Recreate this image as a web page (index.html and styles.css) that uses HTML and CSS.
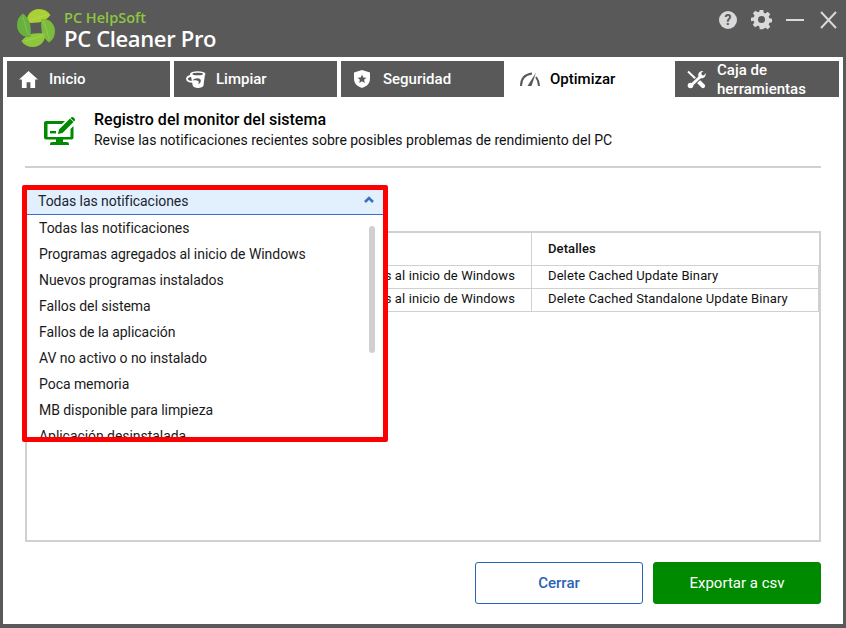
FILE: index.html
```html
<!DOCTYPE html>
<html lang="es">
<head>
<meta charset="utf-8">
<title>PC Cleaner Pro</title>
<link rel="stylesheet" href="styles.css">
</head>
<body>
<div class="window">
  <header class="titlebar">
    <div class="brand">
      <svg class="logo" viewBox="-19 -19 38 38" width="38" height="38">
        <defs>
          <path id="leaf" d="M-9 -5.500 C-10 -13.500 -4 -19 3 -19 C8 -19 12 -17 14.500 -13 C10.500 -8 5.500 -5.500 1 -5.500 C-3 -5 -6 -5 -9 -5.500 Z"/>
          <path id="rib" d="M-7 -7 C-2 -10 5 -11 11 -13" fill="none" stroke="#d6e9a0" stroke-opacity=".45" stroke-width=".6"/>
        </defs>
        <use href="#leaf" fill="#a9d034"/><use href="#rib"/>
        <g transform="rotate(90)"><use href="#leaf" fill="#7cbc3d"/><use href="#rib"/></g>
        <g transform="rotate(180)"><use href="#leaf" fill="#8fc73c"/><use href="#rib"/></g>
        <g transform="rotate(270)"><use href="#leaf" fill="#68b13f"/><use href="#rib"/></g>
      </svg>
      <div class="brand-text">
        <div class="brand-top">PC HelpSoft</div>
        <div class="brand-name">PC Cleaner Pro</div>
      </div>
    </div>
    <div class="win-controls">
      <svg viewBox="0 0 20 20" width="20" height="20"><circle cx="10" cy="10" r="9" fill="#d9d9d9"/><text x="10" y="15" text-anchor="middle" class="help-mark">?</text></svg>
      <svg viewBox="0 0 24 24" width="21" height="21"><path fill="#d9d9d9" fill-rule="evenodd" d="M10 1h4l.6 3.200 1.900.8 2.700-1.800 2.800 2.800-1.800 2.700.8 1.900 3.200.6v4l-3.200.6-.8 1.900 1.800 2.700-2.800 2.800-2.700-1.800-1.900.8L14 23h-4l-.6-3.200-1.900-.8-2.700 1.800-2.800-2.800 1.800-2.700-.8-1.900L0 14v-4l3.200-.6.8-1.900-1.800-2.700 2.800-2.800 2.700 1.800 1.900-.8zM12 8a4 4 0 1 0 0 8 4 4 0 0 0 0-8z"/></svg>
      <svg viewBox="0 0 20 20" width="20" height="20"><path d="M1 10h18" stroke="#d9d9d9" stroke-width="2"/></svg>
      <svg viewBox="0 0 20 20" width="20" height="20"><path d="M3 2l15 16M18 2L3 18" stroke="#d9d9d9" stroke-width="2"/></svg>
    </div>
  </header>

  <main class="panel">
    <nav class="tabs">
      <div class="tab">
        <span class="tab-icon"><svg viewBox="0 0 20 18" width="19" height="17"><path fill="#fff" d="M10 0l10 9h-3v9h-5v-6H8v6H3V9H0z"/></svg></span>
        <span class="tab-label">Inicio</span>
      </div>
      <div class="tab">
        <span class="tab-icon"><svg viewBox="0 0 20 17" width="20" height="17">
          <path fill="#fff" d="M4.500 3h14.500l-1.500 11.500c-.3 1.600-2.800 2.500-5.500 2.500s-5-.9-5.300-2.500L6 10.500 4.500 3z"/>
          <ellipse cx="11.700" cy="3" rx="7.800" ry="2.800" fill="#fff"/>
          <ellipse cx="11.700" cy="3" rx="5.300" ry="1.300" fill="#595959"/>
          <path fill="none" stroke="#fff" stroke-width="1.800" d="M6 4.500C3 5 1 6.300 1 8c0 1.700 2.800 2.800 6 2.800"/>
          <path fill="#595959" d="M6.500 9.500c2.500-.7 5-.2 6 .8.600.7.300 1.800-.5 2.800 3-.7 3.500-3.500 2-5-2-1.500-6-.5-7.500 1.400z"/>
        </svg></span>
        <span class="tab-label">Limpiar</span>
      </div>
      <div class="tab">
        <span class="tab-icon tab-icon-shield"><svg viewBox="0 0 16 18" width="16" height="18"><path fill="#fff" fill-rule="evenodd" d="M8 0l8 2.500V9c0 4.500-3.500 7.500-8 9-4.500-1.500-8-4.500-8-9V2.500zM8 4.500l-1.300 2.900-3.100.3 2.300 2.100-.7 3.100L8 11.300l2.800 1.600-.7-3.100 2.300-2.100-3.100-.3z"/></svg></span>
        <span class="tab-label">Seguridad</span>
      </div>
      <div class="tab tab-active">
        <span class="tab-icon"><svg viewBox="0 0 20 14" width="20" height="14"><path fill="none" stroke="#595959" stroke-width="2" d="M1 14C1 8 4 2.500 12 1.500M16 5c1.500 2 3 5 3 9"/><path fill="#595959" d="M16 .5l-4.500 13.500h-4z"/></svg></span>
        <span class="tab-label">Optimizar</span>
      </div>
      <div class="tab">
        <span class="tab-icon"><svg viewBox="0 0 19 19" width="19" height="19">
          <path stroke="#fff" stroke-width="2" d="M1 1.500l9 8.500"/>
          <path stroke="#fff" stroke-width="4.200" stroke-linecap="round" d="M11.500 11.500l4.500 4.500"/>
          <path stroke="#595959" stroke-width="5" d="M13 7L4 15.500"/>
          <path stroke="#fff" stroke-width="3" d="M13 7L4.500 15"/>
          <circle cx="3.500" cy="15.500" r="2.800" fill="#fff"/>
          <path fill="#fff" d="M18.500 3c.6 2.200-.6 4.600-3 5.200-1.300.3-2.500 0-3.500-.8-.8-1.200-1-2.400-.6-3.700.6-2 2.800-3.200 5-2.700L14.200 3l.7 2 2 .5z"/>
        </svg></span>
        <span class="tab-label tab-label-wrap">Caja de herramientas</span>
      </div>
    </nav>

    <section class="content">
      <div class="page-head">
        <svg class="head-icon" viewBox="0 0 31 28" width="31" height="28">
          <path fill="#008a00" d="M2 4h19l-3 3H3.500v13h23V12l3-3v11.500c0 1.200-.9 2-2 2H2c-1.100 0-2-.8-2-2V6c0-1.100.9-2 2-2z"/>
          <rect x="6" y="14" width="6" height="2.400" fill="#008a00"/>
          <path fill="#008a00" d="M14 17l1-4.500L26 1.500l3.500 3.500-11 11zM27 .5c.8-.7 1.800-.7 2.500 0l1 1c.7.700.7 1.700 0 2.500l-.5.500L26.500 1z"/>
          <path fill="#008a00" d="M8 25h15c1 0 2 .8 2 2v1H6v-1c0-1.200 1-2 2-2zM12 22h7v3h-7z"/>
        </svg>
        <div class="head-text">
          <h1 class="head-title">Registro del monitor del sistema</h1>
          <p class="head-sub">Revise las notificaciones recientes sobre posibles problemas de rendimiento del PC</p>
        </div>
      </div>

      <div class="log-area">
        <div class="dropdown">
          <div class="dd-head">
            <span>Todas las notificaciones</span>
            <svg class="dd-chevron" viewBox="0 0 10 7" width="10" height="7"><path fill="none" stroke="#3a6fc4" stroke-width="2.600" d="M1 6l4-4 4 4"/></svg>
          </div>
          <div class="dd-list">
            <div class="dd-item">Todas las notificaciones</div>
            <div class="dd-item">Programas agregados al inicio de Windows</div>
            <div class="dd-item">Nuevos programas instalados</div>
            <div class="dd-item">Fallos del sistema</div>
            <div class="dd-item">Fallos de la aplicación</div>
            <div class="dd-item">AV no activo o no instalado</div>
            <div class="dd-item">Poca memoria</div>
            <div class="dd-item">MB disponible para limpieza</div>
            <div class="dd-item">Aplicación desinstalada</div>
            <div class="dd-thumb"></div>
          </div>
        </div>

        <div class="table-box">
          <table class="log-table">
            <thead>
              <tr><th class="col-type"></th><th class="col-detail">Detalles</th></tr>
            </thead>
            <tbody>
              <tr><td class="cell-type">Programas agregados al inicio de Windows</td><td class="cell-detail">Delete Cached Update Binary</td></tr>
              <tr><td class="cell-type">Programas agregados al inicio de Windows</td><td class="cell-detail">Delete Cached Standalone Update Binary</td></tr>
            </tbody>
          </table>
        </div>
      </div>

      <div class="actions">
        <button class="btn btn-outline">Cerrar</button>
        <button class="btn btn-green">Exportar a csv</button>
      </div>
    </section>
  </main>
</div>
</body>
</html>
```

FILE: styles.css
```css
* { box-sizing: border-box; }
html, body { margin: 0; padding: 0; }
body { font-family: Roboto, "Liberation Sans", sans-serif; color: #111; background: #595959; }

.window { width: 846px; height: 628px; display: flex; flex-direction: column; background: #595959; padding: 0 3px 4px; overflow: hidden; }

.titlebar { height: 57px; flex: none; display: flex; justify-content: space-between; align-items: flex-start; }
.brand { display: flex; align-items: flex-start; padding: 9px 0 0 14px; gap: 9px; }
.logo { display: block; }
.brand-text { font-family: "Open Sans", sans-serif; }
.brand-top { color: #8cc63f; font-size: 14.500px; font-weight: 600; line-height: 16px; margin-top: 1px; }
.brand-name { color: #fff; font-size: 22px; font-weight: 600; line-height: 24px; letter-spacing: -0.35px; }

.win-controls { display: flex; align-items: center; gap: 13px; padding: 9px 5px 0 0; }
.win-controls svg { display: block; }
.help-mark { font-family: Roboto, sans-serif; font-weight: 700; font-size: 14px; fill: #595959; }

.panel { flex: 1; min-height: 0; background: #fff; display: flex; flex-direction: column; }

.tabs { flex: none; display: grid; grid-template-columns: repeat(4, 163px) 164px; column-gap: 4px; padding: 4px 4px 0; }
.tab { height: 36px; background: #595959; color: #fff; display: flex; align-items: center; padding-left: 12px; font-size: 15px; font-weight: 500; overflow: hidden; }
.tab-active { background: #fff; color: #000; }
.tab-icon { width: 30px; flex: none; display: flex; align-items: center; }
.tab-icon svg { display: block; }
.tab-icon-shield { padding-left: 1px; }
.tab-label-wrap { line-height: 19px; width: 100px; padding-top: 1px; }

.content { flex: 1; min-height: 0; display: flex; flex-direction: column; padding: 0 22px 20px; }

.page-head { flex: none; height: 71px; border-bottom: 2px solid #d0d0d0; display: flex; align-items: flex-start; padding: 13px 0 0 19px; gap: 19px; }
.head-icon { display: block; margin-top: 7px; }
.head-title { margin: 0; font-size: 16px; font-weight: 500; line-height: 20px; color: #000; }
.head-sub { margin: 0; font-size: 14px; line-height: 20px; color: #111; letter-spacing: -0.01px; }

.log-area { position: relative; flex: 1; min-height: 0; display: flex; flex-direction: column; padding-top: 63px; }

.dropdown { position: absolute; left: -3px; top: 17px; width: 366px; height: 257px; border: 5px solid #f00; border-radius: 2px; background: #fff; z-index: 2; overflow: hidden; display: flex; flex-direction: column; }
.dd-head { flex: none; height: 25px; background: #e1f0fc; border-bottom: 1px solid #3a6fc4; display: flex; align-items: center; justify-content: space-between; padding: 0 9px 2px 11px; font-size: 14px; color: #1a2433; letter-spacing: -0.05px; }
.dd-chevron { display: block; margin-bottom: 3px; }
.dd-list { position: relative; flex: 1; overflow: hidden; }
.dd-item { height: 26px; line-height: 26px; padding-left: 12px; font-size: 14px; color: #1a1a1a; white-space: nowrap; letter-spacing: -0.05px; }
.dd-thumb { position: absolute; right: 8px; top: 11px; width: 6px; height: 127px; background: #d0d0d0; border-radius: 3px; }

.table-box { flex: 1; min-height: 0; border: 2px solid #d0d0d0; background: #fff; }
.log-table { width: 100%; border-collapse: separate; border-spacing: 0; table-layout: fixed; font-size: 13px; letter-spacing: 0.1px; }
.log-table th { height: 33px; text-align: left; font-weight: 500; border-bottom: 1px solid #d0d0d0; color: #111; padding-bottom: 2px; }
.log-table td { height: 23px; border-bottom: 1px solid #d0d0d0; color: #111; white-space: nowrap; padding-bottom: 3px; padding-top: 0; }
.col-type { width: 504px; }
.col-detail, .cell-detail { padding-left: 16px; border-left: 1px solid #d0d0d0; }
.cell-type { text-align: right; padding-right: 16px; }
.cell-detail { border-right: 1px solid #d0d0d0; }

.actions { flex: none; display: flex; justify-content: flex-end; gap: 10px; margin-top: 20px; }
.btn { width: 168px; height: 42px; border-radius: 3px; font-family: Roboto, sans-serif; font-size: 15px; padding: 0; }
.btn-outline { background: #fff; border: 1px solid #2a62b5; color: #2a62b5; font-weight: 500; }
.btn-green { background: #008a00; border: 1px solid #008a00; color: #fff; font-weight: 400; }
```
